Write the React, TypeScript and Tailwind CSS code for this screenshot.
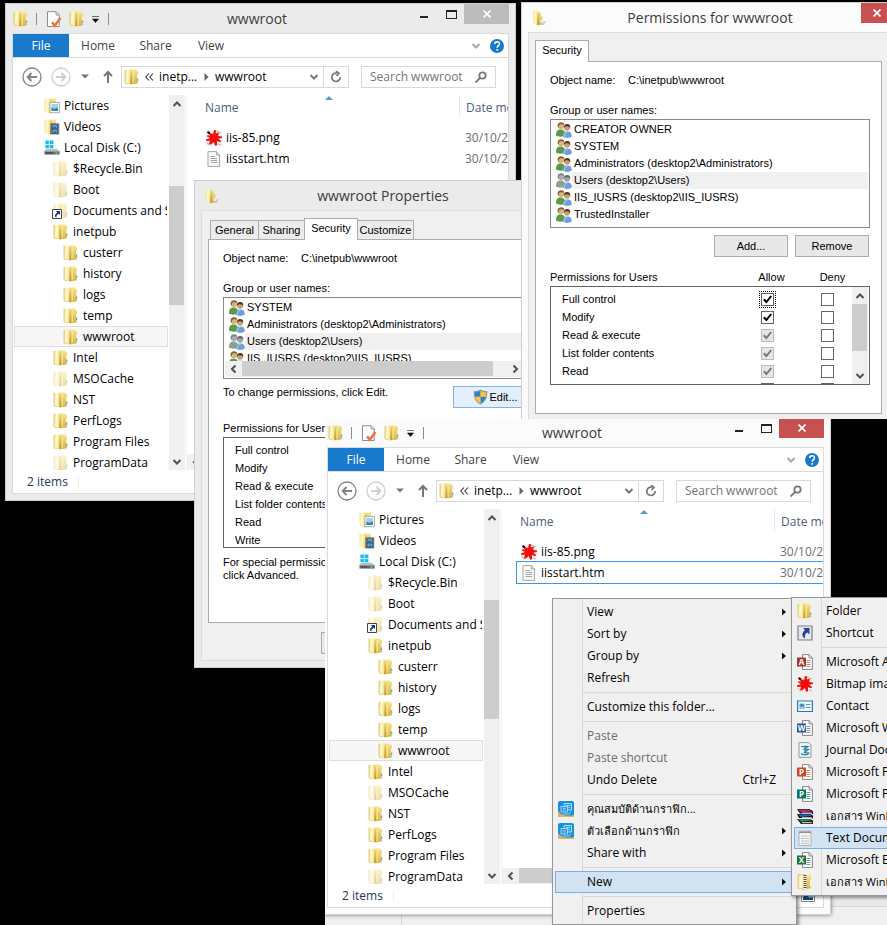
import React from "react";

const UI = "font-['Open_Sans','Noto_Sans',sans-serif]";
const CLASSIC = "font-['Liberation_Sans',Arial,sans-serif]";

/* ---------- icons ---------- */

function Defs() {
  return (
    <svg width="0" height="0" className="absolute" aria-hidden="true">
      <defs>
        <linearGradient id="leaf" x1="0" y1="0" x2="1" y2="0.2">
          <stop offset="0" stopColor="#f2df86" />
          <stop offset="0.5" stopColor="#fffbd2" />
          <stop offset="1" stopColor="#f3e08c" />
        </linearGradient>
        <linearGradient id="back" x1="0" y1="0" x2="0" y2="1">
          <stop offset="0" stopColor="#f7e690" />
          <stop offset="1" stopColor="#d9b036" />
        </linearGradient>
        <linearGradient id="fold" x1="0" y1="0" x2="0" y2="1">
          <stop offset="0" stopColor="#ecd47a" />
          <stop offset="1" stopColor="#b98f24" />
        </linearGradient>
      </defs>
    </svg>
  );
}

function Folder({ faded = false }: { faded?: boolean }) {
  return (
    <svg width="16" height="16" viewBox="0 0 16 16" className={faded ? "shrink-0 opacity-45" : "shrink-0"}>
      <path d="M5 .5h7.500v1.500h1.500v12.200L8 15.300 5 15z" fill="url(#back)" />
      <path d="M1 .8h5.500v14.700L1 13.800z" fill="url(#leaf)" />
      <path d="M1 .8v13l3 1" fill="none" stroke="#d3b75c" strokeWidth=".7" />
      <path d="M6.500 2.500 8.500 1.200v12.800l-2 1.500z" fill="url(#fold)" />
      <path d="M8.500 2h1.200v12l-1.200.6z" fill="#f8ea9a" />
      <path d="M13 5.500h1.300v7.500H13z" fill="#fbf4d2" />
      <path d="M13 9.500h1.200v2.800H13z" fill="#58a8d8" />
    </svg>
  );
}

function OpenFolder() {
  return (
    <svg width="16" height="16" viewBox="0 0 16 16" className="shrink-0">
      <path d="M8 12.500 15 11l-2 4H7z" fill="#bdbdbd" opacity=".7" />
      <path d="M5 2h4l1 1v3l1.500.5V14L6 15z" fill="url(#back)" />
      <path d="M2 .8h4.500v14.700L2 13.500z" fill="url(#leaf)" />
      <path d="M6.500 3 8 2v12l-1.500 1.500z" fill="url(#fold)" />
      <path d="M9.500 9.500H12V13H9.500z" fill="#e6edf0" />
    </svg>
  );
}

function Library({ film = false }: { film?: boolean }) {
  return (
    <svg width="16" height="16" viewBox="0 0 16 16" className="shrink-0">
      <path d="M5 .5h7v13L6 15z" fill="url(#back)" />
      <path d="M.5.8h5.500v14.700L.5 13.800z" fill="url(#leaf)" />
      <path d="M6 2.300 7.800 1.200v12.800L6 15.500z" fill="url(#fold)" />
      {film ? (
        <>
          <path d="M6.500 4.500h8.700v10.800H6.500z" fill="#3c4650" />
          <path d="M8.500 5.400h4.700v4H8.500zM8.500 10.400h4.700v4.200H8.500z" fill="#5a9fd4" />
          <path d="m8.500 9.400 2-2 2.700 2zM8.500 14.600l2.600-2.400 2.100 2.400z" fill="#2c5d86" />
          <path d="M7.100 5.400v9.500M14.300 5.400v9.500" stroke="#e8eef2" strokeWidth=".8" strokeDasharray="1 1" />
        </>
      ) : (
        <>
          <path d="M6 4.500h9.400v10.200H6z" fill="#fff" stroke="#8f9ba3" strokeWidth=".8" />
          <path d="M7.400 6h6.600v7H7.400z" fill="#9fd0ea" />
          <path d="M7.400 13V9.600l2.600 1.200 4-1.400V13z" fill="#3d8a9c" />
        </>
      )}
    </svg>
  );
}

function Disk() {
  return (
    <svg width="16" height="16" viewBox="0 0 17 16" className="shrink-0">
      <path d="M1.500 0h3.700v3.800H1.500zM6 0h4v3.800H6zM1.500 4.600h3.700v3.600H1.500zM6 4.600h4v3.600H6z" fill="#12bdf2" />
      <path d="m2.500 9.300 1-.6h10l2 2.300H.6z" fill="#b9bec1" />
      <path d="M.5 11h16v4H.5z" fill="#5d6b70" />
      <path d="M1 11.200h15v1H1z" fill="#8d999d" />
      <path d="M2 13.200h7" stroke="#39474c" />
      <path d="M12.200 12.700h2.400v1.600h-2.400z" fill="#58e04a" />
    </svg>
  );
}

function FolderLink() {
  return (
    <span className="relative block size-4 shrink-0">
      <Folder faded />
      <svg width="10" height="10" viewBox="0 0 10 10" className="absolute -left-px top-[6px]">
        <path d="M.5.500h9v9h-9z" fill="#fff" stroke="#444" />
        <path d="M4 2h4v4L6.700 4.800 4.600 6.600 4.400 8.200 3 7.800l.2-2.400 2-1.900z" fill="#123a8c" />
      </svg>
    </span>
  );
}

function Splat() {
  return (
    <svg width="16" height="16" viewBox="0 0 16 16" className="shrink-0">
      <path d="M0 0h16v16H0z" fill="#f2f2f2" />
      <path d="m1 12 2 3M10 1l5 2M2 9l-2 1M12 14l3 1M3 15l3-2" stroke="#b5b5b5" />
      <path d="m1 1.500 4 2.500 1-1 1 1.500L8 0l2 .2-.2 3.300L13 2.500l-.8 3.500 3.800.6v1.400l-3.700.8 2.900 2.200-1 1.300-3.300-1.200.2 4.200-2 .4-1.300-3.600L5 14.500 3 14l1-3.300-4 .3L.3 9.500 4 8 1 6.500 1.500 5 4 6z" fill="#f50d0d" />
      <path d="m1 3 1-2 2 1 .6 1.700L2.700 4z" fill="#2e1414" />
    </svg>
  );
}

function TextPage() {
  return (
    <svg width="16" height="16" viewBox="0 0 16 16" className="shrink-0">
      <path d="M2 .6h8.600L13.600 4v11.400H2z" fill="#fafafa" stroke="#9a9a9a" strokeWidth=".9" />
      <path d="M10.400.8V4h3" fill="#e4e4e4" stroke="#9a9a9a" strokeWidth=".8" />
      <path d="M4.500 5.500H9M4.500 7.500h6.600M4.500 9.500h6.600M4.500 11.500h6.600" stroke="#a5a5a5" />
    </svg>
  );
}

function CheckedPage() {
  return (
    <svg width="16" height="17" viewBox="0 0 16 17" className="shrink-0">
      <path d="M1.500.7h8.700l3 3V15.500H1.500z" fill="#fff" stroke="#8c8c8c" />
      <path d="M10 .8V4h3.200" fill="#ddd" stroke="#8c8c8c" strokeWidth=".8" />
      <path d="m6 11.400 2.800 3.300L14.400 7" fill="none" stroke="#ec7442" strokeWidth="2.600" />
    </svg>
  );
}

function People({ gray = false }: { gray?: boolean }) {
  return (
    <svg width="16" height="16" viewBox="0 0 16 16" className="shrink-0">
      <path d="M0 13.500C0 9 1.600 7.600 4.600 7.600S9 9 9 13.500C7 15 2 15 0 13.500z" fill={gray ? "#8ba18c" : "#5d9a44"} />
      <circle cx="5" cy="4" r="3.200" fill={gray ? "#a9aeb2" : "#d8b483"} />
      <path d="M1.600 4.200C1.400 1.400 3 .3 5 .3S8.400 1.200 8.400 3C6.400 2 4 2 3 3.400L2.600 6z" fill={gray ? "#7b858c" : "#866137"} />
      <path d="M6.800 14.600c0-4 1.400-5.200 4.400-5.200s4.600 1.200 4.600 5.200c-2 1.700-7 1.700-9 0z" fill="#6f9fd6" />
      <path d="M8.300 14.500c.2-3 1.400-4 2.900-4" stroke="#b8d3f1" fill="none" />
      <circle cx="11" cy="5.800" r="3" fill={gray ? "#a5a5a5" : "#c89f74"} />
      <path d="M8 6C7.700 3.200 9 2 11.200 2s3.500 1.500 3 4.400c-.4-1.700-1.500-2-3-2.200C9.600 4 8.600 4.500 8 6z" fill={gray ? "#5f666c" : "#4a3524"} />
    </svg>
  );
}

function Shield() {
  return (
    <svg width="15" height="16" viewBox="0 0 15 16" className="shrink-0">
      <path d="M7.500.5C9.500 1.800 12 2.200 14.300 2.200c.2 6.300-1.500 10.700-6.800 13.300C2.200 12.900.5 8.500.7 2.200 3 2.200 5.500 1.800 7.500.5z" fill="#8d9aa5" />
      <path d="M7.500 2v5.800H2.100C1.900 6.200 1.900 5 1.900 3.400 4 3.300 5.800 2.900 7.500 2zM7.500 7.800h5.400c-.7 2.800-2.300 4.900-5.400 6.500z" fill="#2f80d8" />
      <path d="M7.500 2c1.700.9 3.500 1.300 5.600 1.400 0 1.600 0 2.800-.2 4.400H7.500zM7.500 7.800v6.500C4.400 12.700 2.800 10.600 2.100 7.800z" fill="#fbc92d" />
    </svg>
  );
}

function Chevron({ dir, className = "text-[#505050]" }: { dir: "up" | "down" | "left" | "right"; className?: string }) {
  const d = { up: "M1.500 7 5 3.500 8.500 7", down: "M1.500 3 5 6.500 8.500 3", left: "M6.500 1.500 3 5l3.500 3.500", right: "M3.500 1.500 7 5 3.500 8.500" }[dir];
  return (
    <svg width="10" height="10" viewBox="0 0 10 10" className={className}>
      <path d={d} fill="none" stroke="currentColor" strokeWidth="2" />
    </svg>
  );
}

function OfficeDoc({ letter, color }: { letter: string; color: string }) {
  return (
    <svg width="16" height="16" viewBox="0 0 16 16" className="shrink-0">
      <path d="M5.500.6h6.600L15.400 4v11.400H5.500z" fill="#fff" stroke="#777" strokeWidth=".9" />
      <path d="M12 .8V4h3.200" fill="none" stroke="#777" strokeWidth=".8" />
      <path d="M9.500 6.500h4M9.500 8.500h4M9.500 10.500h4M9.500 12.500h4" stroke={color} opacity=".65" />
      <path d="M0 3.500h9v9H0z" fill={color} />
      <text x="4.500" y="10.900" textAnchor="middle" fontSize="8" fontWeight="700" fill="#fff" fontFamily="Open Sans, sans-serif">
        {letter}
      </text>
    </svg>
  );
}

function ShortcutIcon() {
  return (
    <svg width="16" height="16" viewBox="0 0 16 16" className="shrink-0">
      <path d="M1 1h14v14H1z" fill="#e3e7f2" stroke="#7b8089" strokeWidth="1.200" />
      <path d="M6 3h6.500v6.500l-2-2C8 8.500 7.500 10.500 8 13.500 4.500 11.500 4.500 8 8 5z" fill="#2b3f96" />
    </svg>
  );
}

function ContactIcon() {
  return (
    <svg width="16" height="16" viewBox="0 0 16 16" className="shrink-0">
      <path d="M.6 3h14.800v10.500H.6z" fill="#f4fbff" stroke="#2a7ba8" strokeWidth="1.200" />
      <path d="M2.500 5.500h5v5.500h-5z" fill="#5aa9d8" />
      <path d="M3.500 11c0-3.500 3-3.500 3 0z" fill="#a8cfe6" />
      <circle cx="5" cy="7.300" r="1" fill="#7c4b2c" />
      <path d="M9 6.500h4.500M9 9.500h4.500" stroke="#4a9cca" />
    </svg>
  );
}

function JournalIcon() {
  return (
    <svg width="16" height="16" viewBox="0 0 16 16" className="shrink-0">
      <path d="M2 .6h9.500L14 3v12.400H2z" fill="#eef6fa" stroke="#8f8f8f" strokeWidth=".9" />
      <path d="M4 4.500h7L7 7l4.500.5-4 3 5 .5M4 11.500c2 2 6 1.500 8 0M8 3.500v8" fill="none" stroke="#2e7f9f" strokeWidth="1.200" />
    </svg>
  );
}

function BooksIcon() {
  return (
    <svg width="17" height="16" viewBox="0 0 17 16" className="shrink-0">
      <path d="M0 1h12l4 2v3l-3-.5H3zM0 6h13l3 1.500v3L13 10H2zM0 11h13l3 1.500V16H4z" fill="#1a1420" />
      <path d="M1 1.500h10l4 2-11 .8z" fill="#b52a70" />
      <path d="M1 6.400h11l3 1.400-11 1.100z" fill="#2a62c8" />
      <path d="M1 11.300h11l3 1.300-11 1.200z" fill="#21955a" />
      <path d="M5 5.100h10M5 9.800h10M5 14.700h10" stroke="#f0ead8" strokeWidth="1" />
    </svg>
  );
}

function NotepadIcon() {
  return (
    <svg width="16" height="16" viewBox="0 0 16 16" className="shrink-0">
      <path d="M2 2.500h12v12.900H2z" fill="#fafafa" stroke="#a3a8ac" strokeWidth=".9" />
      <path d="M4 6h8.500M4 8.500h8.500M4 11h8.500M4 13.300h8.500" stroke="#b8bec3" />
      <path d="M2.500 2h11" stroke="#777" strokeWidth="2.400" strokeDasharray="1 1" />
    </svg>
  );
}

function ZipIcon() {
  return (
    <svg width="16" height="16" viewBox="0 0 16 16" className="shrink-0">
      <path d="M6 .8h7l1.200 1.200v12L8 15.500z" fill="url(#back)" />
      <path d="M1 .8h6.500v14.700L1 14z" fill="url(#leaf)" stroke="#c9a94a" strokeWidth=".6" />
      <path d="M8 1v14" stroke="#fafafa" strokeWidth="3" />
      <path d="M8 1v14" stroke="#474747" strokeWidth="3" strokeDasharray="1 1" />
      <path d="M13 6h1.500v7H13z" fill="#f8f3da" />
    </svg>
  );
}

function GraphicsIcon() {
  return (
    <svg width="16" height="16" viewBox="0 0 16 16" className="shrink-0">
      <rect width="16" height="16" rx="2" fill="#1590dc" />
      <path d="M0 9.500c2 4.500 8 6 16 4.500a2 2 0 0 1-2 2H2a2 2 0 0 1-2-2z" fill="#d9b45a" />
      <path d="M6 2.500h7.500V9H6z" fill="#2c9ee4" stroke="#b5e0ff" strokeWidth=".9" />
      <path d="M3 5.500h6.500V11H3z" fill="#1a8edb" stroke="#b5e0ff" strokeWidth=".9" />
      <path d="M4.500 7.300h3.500M4.500 9h3.500M8 4.500h4M10.500 6.500H12M5 13h6l2-2.500" fill="none" stroke="#b5e0ff" strokeWidth=".8" />
    </svg>
  );
}

/* ---------- shared controls ---------- */

function VScroll({ thumb }: { thumb: string }) {
  return (
    <div className="flex w-4 shrink-0 flex-col items-center bg-[#f0f0f0]">
      <button aria-label="Scroll up" className="flex h-[17px] shrink-0 items-center"><Chevron dir="up" /></button>
      <div className="w-full flex-1"><div className={`w-[15px] bg-[#cdcdcd] ${thumb}`} /></div>
      <button aria-label="Scroll down" className="flex h-[17px] shrink-0 items-center"><Chevron dir="down" /></button>
    </div>
  );
}

function HScroll({ thumb }: { thumb: string }) {
  return (
    <div className="flex h-4 shrink-0 items-center bg-[#f0f0f0]">
      <button aria-label="Scroll left" className="flex w-[17px] shrink-0 justify-center"><Chevron dir="left" /></button>
      <div className="h-full flex-1"><div className={`h-[15px] bg-[#cdcdcd] ${thumb}`} /></div>
      <button aria-label="Scroll right" className="flex w-[17px] shrink-0 justify-center"><Chevron dir="right" /></button>
    </div>
  );
}

/* ---------- explorer ---------- */

type Node = { name: string; level: 1 | 2 | 3; icon: React.ReactNode; selected?: boolean };

const tree: Node[] = [
  { name: "Pictures", level: 1, icon: <Library /> },
  { name: "Videos", level: 1, icon: <Library film /> },
  { name: "Local Disk (C:)", level: 1, icon: <Disk /> },
  { name: "$Recycle.Bin", level: 2, icon: <Folder faded /> },
  { name: "Boot", level: 2, icon: <Folder faded /> },
  { name: "Documents and Settings", level: 2, icon: <FolderLink /> },
  { name: "inetpub", level: 2, icon: <Folder /> },
  { name: "custerr", level: 3, icon: <Folder /> },
  { name: "history", level: 3, icon: <Folder /> },
  { name: "logs", level: 3, icon: <Folder /> },
  { name: "temp", level: 3, icon: <Folder /> },
  { name: "wwwroot", level: 3, icon: <Folder />, selected: true },
  { name: "Intel", level: 2, icon: <Folder /> },
  { name: "MSOCache", level: 2, icon: <Folder faded /> },
  { name: "NST", level: 2, icon: <Folder /> },
  { name: "PerfLogs", level: 2, icon: <Folder /> },
  { name: "Program Files", level: 2, icon: <Folder /> },
  { name: "ProgramData", level: 2, icon: <Folder faded /> },
];

const indent = { 1: "pl-[29px]", 2: "pl-[38px]", 3: "pl-[48px]" };

function Explorer({ active = false, focusRow = false, className }: { active?: boolean; focusRow?: boolean; className: string }) {
  return (
    <section
      className={`${UI} flex h-[498px] w-[511px] flex-col border border-[#cfcfcf] px-[6px] pb-[6px] text-[12px] text-black ${active ? "bg-[#fbfbfb]" : "bg-[#ebebeb]"} ${className}`}
    >
      <header className="grid h-[29px] shrink-0 grid-cols-[1fr_auto_1fr]">
        <div className="flex items-center gap-[7px] pl-px">
          <Folder />
          <span className="h-3 w-px bg-[#8c8c8c]" />
          <span className="pl-[2px]"><CheckedPage /></span>
          <Folder />
          <svg width="7" height="7" viewBox="0 0 7 7"><path d="M0 .5h7M.5 3h6L3.500 6.500z" fill="#111" stroke="#111" strokeWidth=".6" /></svg>
          <span className="ml-[2px] h-3 w-px bg-[#8c8c8c]" />
        </div>
        <h1 className="pr-[7px] text-[14px] leading-[30px] text-[#3c3c3c]">wwwroot</h1>
        <div className="flex items-start justify-end">
          <button aria-label="Minimize" className="flex h-[14px] w-7 items-end justify-center"><span className="h-[2px] w-2 bg-[#222]" /></button>
          <button aria-label="Maximize" className="flex h-[15px] w-[26px] items-end justify-center"><span className="h-[9px] w-[11px] border border-t-2 border-[#222]" /></button>
          <button aria-label="Close" className={`flex h-[20px] w-[45px] items-center justify-center ${active ? "bg-[#c75050]" : "bg-[#bcbcbc]"}`}>
            <svg width="8" height="8" viewBox="0 0 8 8"><path d="m.5.5 7 7m0-7-7 7" stroke="#fff" strokeWidth="1.600" /></svg>
          </button>
        </div>
      </header>

      <div className="flex min-h-0 flex-1 flex-col border border-[#dadbdc] bg-white">
        <nav className="flex h-[24px] shrink-0 items-stretch border-b border-[#dadbdc] text-[#444]">
          <button className="w-[56px] bg-[#1979ca] text-white">File</button>
          <button className="w-[58px] pt-px">Home</button>
          <button className="w-[57px] pt-px">Share</button>
          <button className="w-[54px] pt-px">View</button>
          <span className="flex-1" />
          <button aria-label="Expand ribbon" className="flex w-7 items-center justify-center"><Chevron dir="down" className="text-[#a8a8a8]" /></button>
          <button aria-label="Help" className="flex w-[18px] items-center">
            <svg width="14" height="14" viewBox="0 0 14 14">
              <circle cx="7" cy="7" r="7" fill="#1979ca" />
              <path d="M4.700 5c0-3.200 4.800-3 4.800-.2C9.500 6.600 7.200 6.600 7.200 8.800M7.200 10v1.700" fill="none" stroke="#fff" strokeWidth="1.500" />
            </svg>
          </button>
        </nav>

        <div className="flex h-[37px] shrink-0 items-center pl-[9px] pr-3">
          <button aria-label="Back">
            <svg width="20" height="20" viewBox="0 0 20 20" fill="none" stroke="#858585"><circle cx="10" cy="10" r="9" strokeWidth="1.300" /><path d="M15 10H6M9.500 6 5.700 10l3.800 4" strokeWidth="2" /></svg>
          </button>
          <button aria-label="Forward" className="ml-[9px]">
            <svg width="20" height="20" viewBox="0 0 20 20" fill="none" stroke="#cfcfcf"><circle cx="10" cy="10" r="9" strokeWidth="1.300" /><path d="M5 10h9M10.500 6l3.800 4-3.800 4" strokeWidth="2" /></svg>
          </button>
          <button aria-label="Recent locations" className="ml-[10px]"><svg width="8" height="5" viewBox="0 0 8 5"><path d="M0 .5h8L4 4.500z" fill="#777" /></svg></button>
          <button aria-label="Up" className="ml-[14px]">
            <svg width="10" height="13" viewBox="0 0 10 13" fill="none" stroke="#777" strokeWidth="2"><path d="M5 13V2M1 6l4-4 4 4" /></svg>
          </button>
          <div className="ml-2 flex h-[22px] flex-1 items-center whitespace-nowrap border border-[#d9d9d9] pl-[2px]">
            <Folder />
            <span className="ml-[5px] flex">
              <svg width="9" height="8" viewBox="0 0 9 8" fill="none" stroke="#333"><path d="M4 .5.8 4 4 7.500M8 .5 4.800 4 8 7.500" strokeWidth="1.100" /></svg>
            </span>
            <button className="ml-[5px] w-[39px] text-left">inetp...</button>
            <svg width="5" height="8" viewBox="0 0 5 8" className="mx-[6px]"><path d="M.5 0v8l4-4z" fill="#666" /></svg>
            <button>wwwroot</button>
            <span className="flex-1" />
            <button aria-label="Previous locations" className="flex w-[18px] justify-center"><Chevron dir="down" className="text-[#777]" /></button>
            <button aria-label="Refresh" className="flex h-full w-[25px] items-center justify-center border-l border-[#d9d9d9]">
              <svg width="12" height="12" viewBox="0 0 12 12" fill="none" stroke="#777" strokeWidth="1.700"><path d="M7 2.200A4.200 4.200 0 1 0 10.200 6M6 0l3 2.300L6.500 5" /></svg>
            </button>
          </div>
          <label className="ml-3 flex h-[22px] w-[135px] items-center border border-[#d9d9d9] pl-2 pr-2">
            <input type="search" aria-label="Search wwwroot" placeholder="Search wwwroot" className="w-full min-w-0 bg-transparent outline-none placeholder:text-[#757575]" />
            <svg width="12" height="12" viewBox="0 0 12 12" className="shrink-0" fill="none" stroke="#777" strokeWidth="1.800"><circle cx="7.500" cy="4.500" r="3.200" /><path d="m5 7-4.500 4.500" /></svg>
          </label>
        </div>

        <div className="flex min-h-0 flex-1">
          <ul className="w-[156px] shrink-0 overflow-hidden px-px">
            {tree.map((n) => (
              <li key={n.name}>
                <button
                  className={`flex h-[21px] w-full items-center gap-1 overflow-hidden whitespace-nowrap border ${indent[n.level]} ${n.selected ? "border-[#dedede] bg-[#f7f7f7]" : "border-transparent"}`}
                >
                  {n.icon}
                  <span>{n.name}</span>
                </button>
              </li>
            ))}
          </ul>
          <VScroll thumb="mt-[74px] h-[119px]" />
          <div className="ml-px flex min-w-0 flex-1 flex-col border-l border-[#f3f3f3]">
            <div className="min-h-0 flex-1 overflow-hidden pl-[15px]">
              <table className="w-[357px] table-fixed border-separate border-spacing-0 text-left">
                <thead>
                  <tr className="h-[32px] align-top text-[#4c607a]">
                    <th className="relative w-[257px] p-0 pl-[3px] font-normal leading-[26px]">
                      Name
                      <svg width="8" height="4" viewBox="0 0 8 4" className="absolute left-[123px] top-px"><path d="M4 0l4 4H0z" fill="#5f9dbd" /></svg>
                    </th>
                    <th className="p-0 font-normal leading-[26px]">
                      <div className="h-[22px] border-l border-[#dce8f3] pl-[6px]">Date modified</div>
                    </th>
                  </tr>
                </thead>
                <tbody>
                  <tr className="h-[21px]">
                    <td className="p-0"><span className="flex items-center gap-1 pl-1"><Splat />iis-85.png</span></td>
                    <td className="p-0 pl-[6px] text-[#6d6d6d]">30/10/2556</td>
                  </tr>
                  <tr className={`h-[21px] ${focusRow ? "outline-1 outline-[#3d95e6]" : ""}`}>
                    <td className="p-0"><span className="flex items-center gap-1 pl-1"><TextPage />iisstart.htm</span></td>
                    <td className="p-0 pl-[6px] text-[#6d6d6d]">30/10/2556</td>
                  </tr>
                </tbody>
              </table>
            </div>
            <HScroll thumb="w-[160px]" />
          </div>
        </div>

        <footer className="flex h-[23px] shrink-0 items-center gap-[10px] pl-[14px] pr-2 text-[#1e395b]">
          <span>2 items</span>
          <span className="h-3 w-px bg-[#eee]" />
          <span className="flex-1" />
          <svg width="14" height="12" viewBox="0 0 14 12"><path d="M.5.500h13v11H.5z" fill="#fff" stroke="#888" /><path d="M2 2h10v8H2z" fill="#8fc4e8" /><path d="M2 10V7l3-2 4 3 3-1v3z" fill="#1d4f7c" /></svg>
        </footer>
      </div>
    </section>
  );
}

/* ---------- security dialogs ---------- */

const tabWidth: Record<string, string> = {
  General: "w-[49px]",
  Sharing: "w-[47px]",
  Security: "w-[54px]",
  Customize: "w-[57px]",
};

function Dialog({ title, active = false, tabs, className, children, footer }: {
  title: string; active?: boolean; tabs: string[]; className: string; children: React.ReactNode; footer?: React.ReactNode;
}) {
  return (
    <section className={`${CLASSIC} flex w-[378px] flex-col border border-[#cfcfcf] px-[6px] pb-[6px] text-[11px] leading-[13px] text-black ${active ? "bg-[#fbfbfb]" : "bg-[#ebebeb]"} ${className}`}>
      <header className="grid h-[29px] shrink-0 grid-cols-[1fr_auto_1fr]">
        <div className="flex items-center pl-[3px]"><OpenFolder /></div>
        <h2 className={`${UI} text-[14px] leading-[30px] text-[#3c3c3c]`}>{title}</h2>
        <div className="flex justify-end">
          <button aria-label={`Close ${title}`} className={`flex h-[20px] w-[31px] items-center justify-center ${active ? "bg-[#c75050]" : "bg-[#bcbcbc]"}`}>
            <svg width="8" height="8" viewBox="0 0 8 8"><path d="m.5.500 7 7m0-7-7 7" stroke="#fff" strokeWidth="1.600" /></svg>
          </button>
        </div>
      </header>
      <div className="flex flex-1 flex-col border border-[#dcdcdc] bg-[#f0f0f0] pb-[6px] pl-[6px] pr-[9px] pt-[7px]">
        <div className={`flex items-end ${tabs.length > 1 ? "pl-[2px]" : ""}`} role="tablist">
          {tabs.map((t, i) => {
            const on = t === "Security";
            return (
              <button
                key={t}
                role="tab"
                aria-selected={on}
                className={`whitespace-nowrap border-x border-t border-[#acacac] text-center ${tabWidth[t]} ${on ? "relative -mb-px h-[22px] bg-white pb-[2px]" : "h-[19px] bg-[#ececec]"} ${i > 0 ? "-ml-px" : ""}`}
              >
                {t}
              </button>
            );
          })}
        </div>
        <div className="flex flex-1 flex-col border border-[#acacac] bg-white pl-[14px] pr-[11px] pt-[12px]">{children}</div>
        {footer}
      </div>
    </section>
  );
}

function ObjectName() {
  return (
    <>
      <p className="flex"><span className="w-[78px]">Object name:</span><span>C:\inetpub\wwwroot</span></p>
      <p className="mt-[17px]">Group or user names:</p>
    </>
  );
}

function UserRows({ names }: { names: string[] }) {
  return (
    <ul className="min-h-0 flex-1 overflow-hidden pl-[4px] pt-px">
      {names.map((n) => {
        const on = n.startsWith("Users");
        return (
          <li key={n} className="flex h-[17px] items-center whitespace-nowrap">
            <People gray={on} />
            <span className={`flex-1 pl-[2px] leading-[17px] ${on ? "bg-[#f0f0f0]" : ""}`}>{n}</span>
          </li>
        );
      })}
    </ul>
  );
}

function Tick({ checked = false, disabled = false, focus = false, label }: { checked?: boolean; disabled?: boolean; focus?: boolean; label: string }) {
  return (
    <span className={`inline-grid place-items-center ${focus ? "outline-1 outline-offset-1 outline-dotted outline-black" : ""}`}>
      <input
        type="checkbox"
        aria-label={label}
        defaultChecked={checked}
        disabled={disabled}
        className={`peer size-[13px] appearance-none border [grid-area:1/1] ${disabled ? "border-[#bcbcbc] bg-[#e6e6e6]" : "border-[#666] bg-white"}`}
      />
      <svg width="9" height="9" viewBox="0 0 9 9" className={`pointer-events-none invisible [grid-area:1/1] peer-checked:visible ${disabled ? "text-[#777]" : "text-black"}`}>
        <path d="M.8 4.200 3.400 7 8.200 1" fill="none" stroke="currentColor" strokeWidth="2" />
      </svg>
    </span>
  );
}

const rights = [
  { name: "Full control", locked: false, allow: true },
  { name: "Modify", locked: false, allow: true },
  { name: "Read & execute", locked: true, allow: true },
  { name: "List folder contents", locked: true, allow: true },
  { name: "Read", locked: true, allow: true },
  { name: "Write", locked: false, allow: true },
];

function PropertiesDialog() {
  return (
    <Dialog
      title="wwwroot Properties"
      tabs={["General", "Sharing", "Security", "Customize"]}
      className="absolute left-[194px] top-[180px] h-[488px]"
      footer={
        <div className="flex h-[31px] items-end pl-[113px]">
          <button className="h-[22px] w-[75px] border border-[#acacac] bg-[#e8e8e8]">OK</button>
        </div>
      }
    >
      <ObjectName />
      <div className="mt-[2px] flex h-[82px] w-[302px] flex-col border border-[#828790] px-px pb-px">
        <UserRows names={["SYSTEM", "Administrators (desktop2\\Administrators)", "Users (desktop2\\Users)", "IIS_IUSRS (desktop2\\IIS_IUSRS)"]} />
        <HScroll thumb="w-[251px]" />
      </div>
      <div className="mt-[7px] flex w-[305px] justify-between">
        <span>To change permissions, click Edit.</span>
        <button className="flex h-[22px] w-[75px] items-center justify-center gap-px whitespace-nowrap border border-[#7eb4ea] bg-[#e3effb] pl-[10px]"><Shield />Edit...</button>
      </div>
      <p className="mt-[14px]">Permissions for Users</p>
      <ul className="mt-[2px] h-[111px] overflow-hidden border border-[#646464] pl-[11px] pt-[3px]">
        {rights.map((r) => <li key={r.name} className="h-[18px] leading-[18px]">{r.name}</li>)}
      </ul>
      <p className="mt-[8px]">For special permissions,<br />click Advanced.</p>
    </Dialog>
  );
}

function PermissionsDialog() {
  return (
    <Dialog title="Permissions for wwwroot" active tabs={["Security"]} className="absolute left-[521px] top-[2px] h-[560px]"
      footer={<div className="h-[134px]" />}>
      <ObjectName />
      <div className="mt-[2px] flex h-[109px] flex-col border border-[#828790] px-px">
        <UserRows names={["CREATOR OWNER", "SYSTEM", "Administrators (desktop2\\Administrators)", "Users (desktop2\\Users)", "IIS_IUSRS (desktop2\\IIS_IUSRS)", "TrustedInstaller"]} />
      </div>
      <div className="mt-[7px] flex justify-end gap-[7px] pr-px">
        <button className="h-[22px] w-[74px] border border-[#acacac] bg-[#e8e8e8]">Add...</button>
        <button className="h-[22px] w-[74px] border border-[#acacac] bg-[#e8e8e8]">Remove</button>
      </div>
      <div className="mt-[14px] flex">
        <span className="flex-1">Permissions for Users</span>
        <span className="w-[61px] text-center">Allow</span>
        <span className="w-[61px] text-center">Deny</span>
        <span className="w-[7px]" />
      </div>
      <div className="mt-[2px] flex h-[99px] overflow-hidden border border-[#646464] pr-px">
        <div className="flex-1 overflow-hidden pt-[3px]">
          <table className="w-full table-fixed border-separate border-spacing-0">
            <tbody>
              {rights.map((r, i) => (
                <tr key={r.name} className="h-[18px]">
                  <th scope="row" className="p-0 pl-[11px] text-left font-normal">{i === 5 ? "" : r.name}</th>
                  <td className="w-[60px] p-0 pl-[7px] leading-[0]">
                    <Tick label={`Allow ${r.name}`} checked={r.allow} disabled={r.locked} focus={i === 0} />
                  </td>
                  <td className="w-[38px] p-0 pl-[7px] leading-[0]"><Tick label={`Deny ${r.name}`} /></td>
                </tr>
              ))}
            </tbody>
          </table>
        </div>
        <VScroll thumb="h-[47px]" />
      </div>
    </Dialog>
  );
}

/* ---------- context menus ---------- */

type Entry = { label: string; icon?: React.ReactNode; arrow?: boolean; hot?: boolean; off?: boolean; keys?: string; small?: boolean } | null;

const folderMenu: Entry[] = [
  { label: "View", arrow: true },
  { label: "Sort by", arrow: true },
  { label: "Group by", arrow: true },
  { label: "Refresh" },
  null,
  { label: "Customize this folder..." },
  null,
  { label: "Paste", off: true },
  { label: "Paste shortcut", off: true },
  { label: "Undo Delete", keys: "Ctrl+Z" },
  null,
  { label: "คุณสมบัติด้านกราฟิก...", icon: <GraphicsIcon />, small: true },
  { label: "ตัวเลือกด้านกราฟิก", icon: <GraphicsIcon />, arrow: true, small: true },
  { label: "Share with", arrow: true },
  null,
  { label: "New", arrow: true, hot: true },
  null,
  { label: "Properties" },
];

const newMenu: Entry[] = [
  { label: "Folder", icon: <Folder /> },
  { label: "Shortcut", icon: <ShortcutIcon /> },
  null,
  { label: "Microsoft Access Database", icon: <OfficeDoc letter="A" color="#a4373a" /> },
  { label: "Bitmap image", icon: <Splat /> },
  { label: "Contact", icon: <ContactIcon /> },
  { label: "Microsoft Word Document", icon: <OfficeDoc letter="W" color="#2b579a" /> },
  { label: "Journal Document", icon: <JournalIcon /> },
  { label: "Microsoft PowerPoint Presentation", icon: <OfficeDoc letter="P" color="#d24726" /> },
  { label: "Microsoft Publisher Document", icon: <OfficeDoc letter="P" color="#077568" /> },
  { label: "เอกสาร WinRAR", icon: <BooksIcon />, small: true },
  { label: "Text Document", icon: <NotepadIcon />, hot: true },
  { label: "Microsoft Excel Worksheet", icon: <OfficeDoc letter="X" color="#217346" /> },
  { label: "เอกสาร WinRAR ZIP", icon: <ZipIcon />, small: true },
];

function Menu({ entries, className }: { entries: Entry[]; className: string }) {
  return (
    <div role="menu" className={`${UI} border border-[#979797] bg-[#f0f0f0] bg-[linear-gradient(#d9d9d9,#d9d9d9)] bg-[length:1px_100%] bg-[position:29px_0] bg-no-repeat p-[2px] text-[12px] text-black shadow-[2px_2px_3px_rgba(0,0,0,0.4)] ${className}`}>
      {entries.map((e, i) =>
        e === null ? (
          <div key={i} role="separator" className="flex h-[7px] items-center pl-7"><span className="h-px w-full bg-[#d7d7d7]" /></div>
        ) : (
          <button
            key={i}
            role="menuitem"
            disabled={e.off}
            className={`flex h-[22px] w-full items-center whitespace-nowrap border pr-[7px] ${e.hot ? "border-[#78aee5] bg-[#d1e2f2]" : "border-transparent"} ${e.off ? "text-[#6d6d6d]" : ""}`}
          >
            <span className="flex w-[31px] shrink-0 pl-[2px]">{e.icon}</span>
            <span className={`flex-1 text-left ${e.small ? "text-[11px]" : ""}`}>{e.label}</span>
            {e.keys && <span className="pr-[10px]">{e.keys}</span>}
            {e.arrow && <svg width="4" height="8" viewBox="0 0 4 8"><path d="M0 .5v7L4 4z" fill="#111" /></svg>}
          </button>
        )
      )}
    </div>
  );
}

export default function App() {
  return (
    <main className="relative h-screen w-full overflow-hidden bg-black">
      <Defs />
      <Explorer className="absolute left-[5px] top-[3px]" />
      <PropertiesDialog />
      <PermissionsDialog />
      <div className="absolute bottom-0 left-[325px] right-0 top-[419px] overflow-hidden bg-black">
        <div className="absolute inset-x-0 bottom-0 top-[474px] flex flex-col bg-[#f0f0f0]">
          <div className="h-[14px] border-b border-[#d5d5d5] bg-[#e9e9e9]" />
          <div className="w-[77px] flex-1 border-r border-[#d5d5d5]" />
        </div>
        <Explorer active focusRow className="absolute -left-[5px] -top-[2px] shadow-[0_0_4px_rgba(0,0,0,0.5)]" />
      </div>
      <Menu entries={folderMenu} className="absolute left-[552px] top-[598px] w-[245px]" />
      <Menu entries={newMenu} className="absolute left-[791px] top-[597px] w-[245px]" />
    </main>
  );
}
